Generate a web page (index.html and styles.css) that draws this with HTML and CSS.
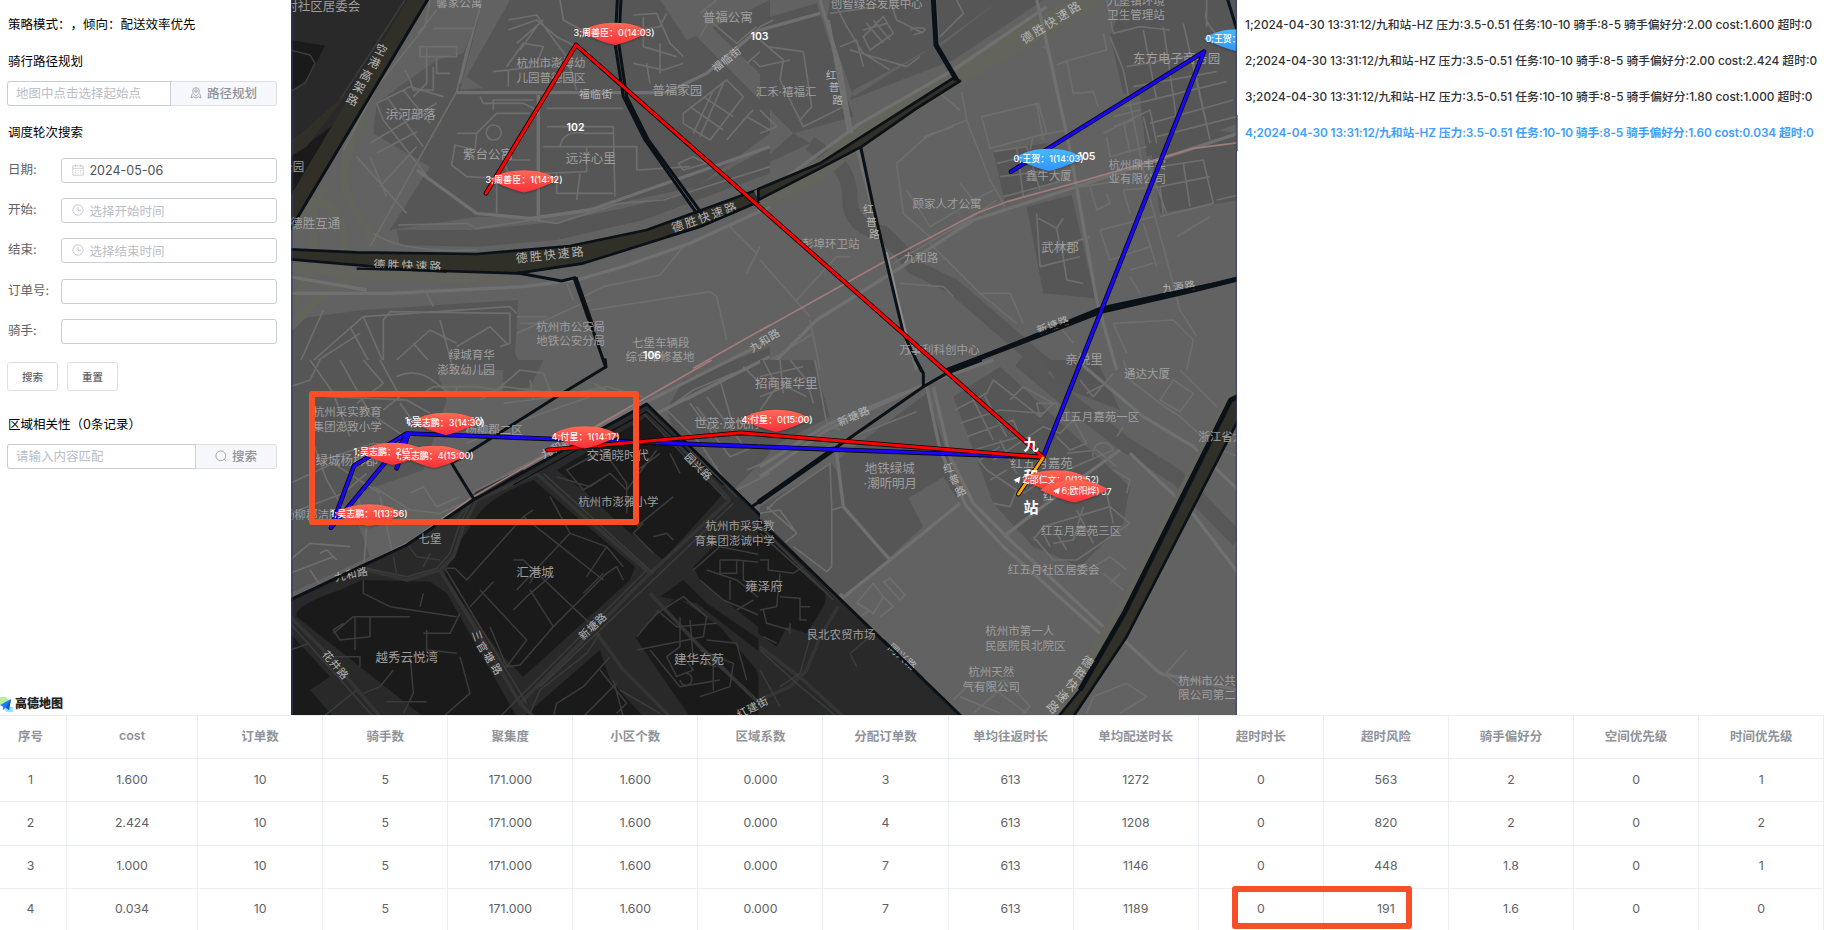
FILE: index.html
```html
<!DOCTYPE html>
<html lang="zh-CN">
<head>
<meta charset="utf-8">
<title>调度轮次</title>
<link rel="stylesheet" href="styles.css">
</head>
<body>
<div class="app">
  <div class="top">
    <aside class="side">
      <h3 class="title">策略模式：，倾向：配送效率优先</h3>
      <h3 class="title title-route">骑行路径规划</h3>
      <div class="group">
        <div class="ph group-input">地图中点击选择起始点</div>
        <div class="append append-wide">
          <svg class="icon" viewBox="0 0 12 12"><path d="M6 9.2C4 7 2.7 5.6 2.7 4A3.3 3.3 0 0 1 9.300 4C9.300 5.600 8 7 6 9.200Z"/><circle cx="6" cy="4" r="1.300"/><path d="M2.300 6.500 1 11 3.500 9.800 6 11 8.500 9.800 11 11 9.700 6.500"/></svg>
          <span>路径规划</span>
        </div>
      </div>
      <h3 class="title title-round">调度轮次搜索</h3>
      <div class="form">
        <div class="row"><label>日期:</label><div class="field date"><svg class="icon" viewBox="0 0 12 12"><path d="M.8 1.800H11.200V11.200H.8ZM.8 4.300H11.200M3.500.5V2.800M8.500.5V2.800M3 6.500H4M5.500 6.500H6.500M8 6.500H9M3 8.800H4M5.500 8.800H6.500M8 8.800H9"/></svg><span>2024-05-06</span></div></div>
        <div class="row"><label>开始:</label><div class="field ph"><svg class="icon" viewBox="0 0 12 12"><circle cx="6" cy="6" r="5.200"/><path d="M6 3V6.300H8.800"/></svg><span>选择开始时间</span></div></div>
        <div class="row"><label>结束:</label><div class="field ph"><svg class="icon" viewBox="0 0 12 12"><circle cx="6" cy="6" r="5.200"/><path d="M6 3V6.300H8.800"/></svg><span>选择结束时间</span></div></div>
        <div class="row"><label>订单号:</label><div class="field"></div></div>
        <div class="row"><label>骑手:</label><div class="field"></div></div>
      </div>
      <div class="buttons"><button class="btn">搜索</button><button class="btn">重置</button></div>
      <h3 class="title title-area">区域相关性（0条记录）</h3>
      <div class="group">
        <div class="ph group-input">请输入内容匹配</div>
        <div class="append append-narrow">
          <svg class="icon" viewBox="0 0 12 12"><circle cx="5.800" cy="5.800" r="4.900"/><path d="M9.400 9.400 11.300 11.300"/></svg>
          <span>搜索</span>
        </div>
      </div>
      <div class="logo">
        <svg class="logo-mark" viewBox="0 0 13 15"><path d="M0 0H6L9 4 0 8Z" fill="#b9ef9a"/><path d="M3 9 13 10V15H6Z" fill="#8fe6ff"/><path d="M0 8 11 2 9 13 5.500 10.500 3 13V9.500Z" fill="#1d7df5"/><path d="M11 2 5.500 10.500 9 13Z" fill="#1557dc"/></svg>
        <span>高德地图</span>
      </div>
    </aside>

    <svg class="map" viewBox="291 0 946 715">
      <defs>
        <linearGradient id="red" x1="0" y1="0" x2="0" y2="1"><stop offset="0" stop-color="#ff6a55"/><stop offset="1" stop-color="#f92f38"/></linearGradient>
        <linearGradient id="blue" x1="0" y1="0" x2="0" y2="1"><stop offset="0" stop-color="#45b9ff"/><stop offset="1" stop-color="#3494fb"/></linearGradient>
        <path id="leaf" d="M-34-1C-20-14 20-14 34-1C21 5 8 10 0 11.500C-8 10-21 5-34-1Z"/>
      </defs>
      <rect class="land" x="291" width="946" height="715"/>

      <!-- north-west -->
      <g transform="translate(290 0) scale(.33333)">
        <path class="block" d="M655 0H1110L1190 120 1440 0V400L1220 560 980 610 740 650 560 650 300 690 420 500 250 400 260 310 440 180 520 160 570 30ZM320 690 560 690 800 665 1000 625 1180 580 1440 440V520L1060 660 800 720 560 740 330 735Z"/>
        <path class="land" d="M530 230 660 0H580L510 270 580 265ZM1110 0 1440 330V250L1180 0Z"/>
        <path class="block" d="M0 960 220 930 685 900 675 1060 700 1110H0Z"/>
        <path class="dark" d="M0 0H412L0 690Z"/>
        <path class="darker" d="M0 120 105 137 55 235 0 275ZM0 470 150 360 100 440 0 600Z"/>
        <path class="rk" d="M0 150 60 165 75 190 45 250 0 275M345 0 130 330 0 430"/>
        <path class="hw" d="M352 0H412L0 695V590L190 270ZM180 270 50 440 0 470V430Z"/>
        <path class="ol" d="M235 340Q120 500 190 620T260 730M90 600Q170 640 165 760M70 590V750M110 560 0 700M0 800 300 830 660 835M180 830 80 900 0 980M60 820 0 930"/>
        <path class="r" d="M420 0 405 80 260 260 160 450M575 0 510 250M430 85H555M440 30 385 100M570 30 530 150 500 275M500 275 1090 280M500 275 240 740M390 140H500V170H390ZM410 140V250L370 290M440 170V220H480M345 210 360 240 370 270H430V200"/>
        <path class="rw" d="M500 278H1130L1250 220 1440 60M745 285V660M380 510 560 640 720 655 900 630 1440 440"/>
        <path class="r" d="M260 310 360 260 460 290M260 310 280 360 420 540M290 290 400 440M340 270 420 370M240 430 440 310M260 460 380 395M200 470 350 640M270 560 380 440M240 470 290 590M500 400H560M560 400 620 340H720M610 330V300H730M570 290 580 310H700L740 330M770 325H1000M610 375A22 22 0 1 0 612 420A22 22 0 1 0 610 375M560 400 555 450 495 435 485 495 530 530 740 540M620 540V640M660 535 640 480 720 480M770 380H970L975 590M810 440Q820 390 880 400H970M760 440H1040V510L1200 500M760 520 890 515M800 520V580H970M870 520 860 600M890 440V515"/>
        <path class="r" d="M655 60 740 45 770 90 830 170 860 270M655 90 740 60 800 110 900 160M680 130 760 60M650 200 700 130 760 140 740 190M690 150 740 80M610 215 700 205 830 190M655 210V260M810 0 820 60 930 120M1030 45 1100 40 1140 130 1180 170M1050 90 1110 80 1130 40M1060 50V140L1160 170M1030 190 1120 210 1180 190M1070 190 1080 250M1110 130V220M1240 45 1340 130 1400 80M1230 40 1280 0M1260 60 1230 110"/>
        <path class="r" d="M1180 340 1310 240 1360 290 1260 420 1180 370ZM1200 320 1300 390M1240 290 1330 350M1270 270 1210 400M1300 250 1230 410M1310 420 1370 350 1440 390M1370 350 1390 330M1390 180 1440 230M1370 190 1440 130M1165 490 1210 470 1250 490 1180 510Z"/>
        <path class="r" d="M325 675 530 670 560 685 730 660 800 670 990 610 1120 600 1440 500M250 700Q340 760 560 750"/>
        <path class="rw" d="M0 880 300 880 700 860 860 840 1000 800 1200 730 1440 620M0 830 230 870"/>
        <path class="r" d="M405 870 430 920M830 850 850 900M890 940 880 890 940 860 1110 825 1180 740M905 930 1260 875 1280 890 1310 1020M1320 680 1400 760M1410 740 1370 820M100 930 20 1110M60 1090 220 950 660 920 680 940M280 1080V960L300 935 660 940V1030L630 1040M220 950 290 1110M180 980 250 1110M70 1090 210 1000M320 1080 420 990 500 1030M370 1030 440 1110M500 1040 600 980 650 1030M450 960 490 1110M680 950H770M690 970H780M680 1000 900 900"/>
        <path class="rail" d="M1210 1105 1440 975"/>
        <path class="hw edge" d="M0 748 200 757 560 762 840 738 1070 690 1442 555V590L1230 680 880 790 680 820 370 810 0 778Z"/>
        <path class="bd" d="M415-5 0 690M982 0 975 130 1000 290 1065 420 1220 640M993 0 986 130 1010 290 1075 420 1235 640M680 818 815 843 855 833 948 1105"/>
        <path class="bd bd-wide" d="M855 833 905 975"/>
      </g>

      <!-- north-east -->
      <g transform="translate(760 0) scale(.33333)">
        <path class="block" d="M0 60 170 10 280 350 100 400 0 300ZM210 0H520V140L280 290 200 60ZM530 0H720L540 140ZM0 490 100 400 150 430 0 500ZM270 300 580 180 850 0H720L540 130 280 270ZM800 620 935 585 1005 895 850 880ZM700 455 860 430 890 540 735 610ZM1050 110 1090 0H1435V370L1160 470 1140 290 1090 280ZM1160 360 1435 400V600L1200 640Z"/>
        <path class="water" d="M150 430 220 480Q270 520 270 600T370 700L420 750 460 800 580 860 720 980 870 1110"/>
        <path class="ol band" d="M-5 600 180 510 310 400 590 230 1000-10"/>
        <path class="rw" d="M0 590 300 370 580 210 860 20M0 90 180 40M180 0 240 200 275 400M205 60 265 390M830 0 865 150 930 450 1010 900 1070 1110M290 440 380 790 470 1110M20 1110 170 960 410 810 640 660 950 560 1435 400"/>
        <path class="r" d="M0 120 70 180 60 240 130 380 250 320M20 140 130 155 155 320 120 360M0 200 90 180M0 80 40 60M230 20 260 80 310 160 390 210M240 140 290 120 310 200M310 110 370 50 400 100 330 150ZM320 70 370 130M340 60 390 120M310 90 380 70M390 0 410 60 490 100M450 90Q470 80 490 85T460 105M590 0 610 40 540 110M210 40 350 20M270 150 440 200 480 170M0 400 50 380 0 330"/>
        <path class="r" d="M605 275 620 360 690 540 735 620M410 490 500 410 620 360M410 490 430 640 520 720M490 410 580 380M665 350 835 310 860 400 690 445ZM830 310 850 420M700 455 800 440 840 570M720 530 890 510M710 490 860 455M730 590 900 545M770 440 790 590M810 450 820 410 920 390M600 550 645 605M440 570 510 680 680 580 700 570M890 195 930 180 1040 150 1030 100M920 180 940 280 1000 275 1015 320M850 140 870 150"/>
        <path class="r" d="M1060 100 1140 80 1230 90M1050 110 1090 210 1160 560 1210 740 1260 930 1310 1010M1040 0 1060 100M1100 200 1330 160M1120 260 1370 215M1090 320 1400 245M1170 370 1420 300M1190 410 1430 350M1150 90 1190 300M1210 80 1250 360M1270 70 1350 420M1340 30Q1320 80 1435 150M1300 190 1350 420M1340 0 1340 80"/>
        <path class="r" d="M1030 400 1170 330 1190 430M1040 410 1050 470 1160 440M1060 350 1140 330M1060 380 1120 360M1090 360 1110 460M1150 350 1170 430M970 560 1090 540M990 560 1010 630 1050 610 1040 580M1090 570 1200 560 1210 640M1090 570 1110 640M1160 480 1220 640M1200 500 1330 480 1360 610 1200 650M1270 490 1290 620M1200 560 1350 530M1370 600 1435 585M1250 710 1350 650M1020 690 1180 650M1020 690 1050 780 1170 740M1150 670 1190 800M1110 810 1180 790M1110 830 1140 880"/>
        <path class="r" d="M835 655 890 685 910 655M890 685 900 740 990 710M830 640 840 800 960 770M905 740 920 840 970 850M0 780 150 950M110 900 230 770 270 770M420 850 550 860 580 890M510 730 660 880 770 970M660 880 750 880 790 970M0 1100 160 1000M150 960 180 1110M1060 970 1240 960 1300 1020 1280 1110M1060 970 1100 1060M900 980 940 1030M540 280 600 330M640 650 400 790M710 600 570 700"/>
        <path class="rail" d="M0 993 400 770 650 640 740 605 960 545 1150 490 1300 445 1435 428"/>
        <path class="lite" d="M380 760 450 1060 420 960Z"/>
        <path class="hw edge" d="M-5 567 180 490 290 420 583 232 600 243 470 325 305 440 180 505-5 600Z"/>
        <path class="bd bd-wide" d="M520-5 528 135 590 240"/>
        <path class="bd" d="M302 440 340 620 430 1000 485 1115M560 1112 790 1020 1020 925 1300 865 1440 835M1402-5 1440 120"/>
        <path class="bd bd-wide" d="M560 1112 840 1005 1020 935 1300 870 1440 835"/>
      </g>

      <!-- south-west -->
      <g transform="translate(290 360) scale(.33333)">
        <path class="block" d="M0 0H430L470 120 400 330 200 400 180 560 0 640ZM640 0 760 0 720 80 640 100ZM1180 60 1440-40V280L1320 400 1160 250 1130 150ZM130 500 200 480 240 590 0 700V600Z"/>
        <path class="r" d="M60 0 130 100 180 230M150 0 240 160 360 240M220 0 280 70 200 130M270 0 330 110 280 150M320 50Q380 20 440 70T500 80M110 110 350 120 420 160M380 110 430 80H560L620 90 690 30 760 40 780 90 720 110M0 80 60 60 90 0M570 120 640 80 800 100 950 90 910 70M720 60 730 120M640 130 800 110 950 80 1060 110M100 300 250 250 420 270M0 370 130 310 270 400M70 250 110 360 180 480M0 460 160 400 230 340M250 380 360 450 450 460 520 430M360 400 400 380 440 440 510 410M200 400 230 500 220 640M270 410 310 590M0 600 60 550 180 560M0 640 130 590M60 630 120 720M90 580 110 570 140 600M330 130 380 200M530 250 700 180 900 110"/>
        <path class="r" d="M1190 120 1400 10M1130 150 1230 250 1330 400M1200 130 1320 290 1440 240M1250 110 1370 270M1290 60 1330 200M1360 20 1440 100M1140 140 1210 90 1330 40M1220 140 1290 230M1320 400 1440 340M1370 330 1440 300"/>
        <path class="rw" d="M560 430 1000 210 1440-10M550 400 1000 160 1440-60"/>
        <path class="dark" d="M0 720 350 555 550 420 1070 132 1385 440 1445 500V1070H0Z"/>
        <path class="darker" d="M20 760Q30 730 150 690L215 660 420 665 470 700 680 1070H400L20 770ZM0 820 120 950 60 990 130 1070H0ZM560 470Q600 410 730 360L1035 620 1020 660 700 950 630 880 460 650 500 560ZM800 330 1070 170 1300 400 1120 600 1010 510 890 400ZM1210 620 1300 530 1440 550V830L1230 660ZM1035 830 1160 710 1290 800 1400 930 1440 1060 1200 1070 1130 970ZM700 1070 930 870 960 960 1060 1070ZM1110 710 1180 660 1250 730 1440 860V900L1220 730Z"/>
        <path class="rk wide" d="M230 630 350 660 450 630 490 590 520 500 560 420 740 340M740 340 860 450 1080 640M450 630 560 810 690 1030 730 1070M1080 640 690 1030M1320 420 1080 640M1070 150 1320 420M0 770 110 880 270 1070M500 480 560 400 700 330M920 820 1000 930 1140 1070M1080 700 1230 860 1440 1060"/>
        <path class="rk" d="M230 625 350 650 440 625 480 580 510 490 545 425M760 340 870 440 1090 640M465 625 570 800 710 1030M1070 630 700 1000 630 1070M1330 430 1100 650 750 980M1060 160 1310 420M1080 145 1340 410M0 790 250 1070M470 625 495 625 530 660 700 470 730 450M670 600H700L910 800M700 470 940 660M780 410 840 520 680 690M840 520 950 560 1000 620M570 690 710 840 650 920 600 800M540 740 610 665M670 750 710 710 780 650M720 690 790 800M780 810 950 640 980 620 1000 660M880 700 940 640M950 560 890 650M650 920 690 915 790 800M720 670 730 650"/>
        <path class="rk" d="M800 350 900 380 960 340 880 390 830 330 940 270 1010 370 1010 460M960 340 1010 390 1100 270M1030 340 1110 280M1040 500 1150 410M1140 280 1170 340M1090 580 1030 520 1060 490M1090 530 1130 520 1150 540M220 660V700L300 740 500 770M130 820 190 770H360M195 770V870M240 770V830L150 840 130 810 160 790M390 740 400 700M410 810V870L500 880M360 880 370 1000 340 1060M400 820 480 820 510 760M510 890 540 1000 460 1070M290 1025H410M220 1000 270 980 310 930M130 890H210V920M0 870 60 850M200 990 100 1070"/>
        <path class="rk" d="M310 590 320 640M350 550 380 590 450 600M420 580 400 620M1210 630 1290 560 1440 590M1290 600H1340V640H1290ZM1340 600 1440 610M1250 630 1340 660 1440 740M1230 660 1300 720 1440 780M1320 660V720M1360 600V660L1440 700M1340 750 1390 720M1040 830 1100 760 1180 710 1250 770 1240 830 1040 870M1080 870 1170 980 1290 960M1100 750 1160 800 1280 790M1170 770V860L1130 890 1160 950 1210 930 1180 890M1200 780 1210 900 1280 920M1250 840 1340 850 1370 960M1230 870 1330 910 1320 980 1230 1010M1270 900V990M1170 960A18 18 0 1 0 1190 940M930 820 890 880 750 990 720 1060M790 1070 800 1030 880 980 960 890M930 930 1010 1030 980 1060M880 1070 980 970M970 960 1000 1070M990 990 1110 1060"/>
        <path class="rail" d="M220 615 360 545 550 410 1265 0"/>
        <path class="bd" d="M945-5 948 20 800 110 485 310 553 420M0 720 350 555 550 420 1070 132 1445 500M1385 440 1445 400"/>
        <path class="bd thin" d="M670 375 1070 155 1300 375"/>
      </g>

      <!-- south-east -->
      <g transform="translate(760 360) scale(.33333)">
        <path class="block" d="M0 0H160L210 170 0 280ZM230 300 500 100 600 400 390 590 250 440ZM0 440 215 310 390 600 245 715 0 480ZM580 110 720 20 1110 380 1090 490 960 620 820 560 700 430ZM850 0H1010L1080 150 900 80Z"/>
        <path class="land" d="M445 415 550 350 600 430 490 500Z"/>
        <path class="water" d="M780 0 900 100 1090 250 1250 350 1435 540"/>
        <path class="rw" d="M0 350 200 210 500 70 700 0M0 320 210 190 480 80M500 80 540 270 620 440 730 560 1020 820M520 80 570 290 640 430 750 540 1030 800M600 430 390 600 240 720M230 280 250 440 390 600M730 530 900 400 1080 270M950 0 1150 170 1300 260 1435 390M1110 280 1290 450 1435 640M1080 830 1200 940 1435 990M245 700 130 950 0 1030"/>
        <path class="r" d="M0 50 130 20M0 110 80 80 140 110M60 0 70 100M10 0 50 80 0 150M90 0 140 60 160 130M165 0 200 190 240 210M470 155 200 260M0 460 60 450 110 520 60 560 0 530M20 450 50 420 210 310 215 440V620L200 635 100 560M20 440 100 510M215 450 250 440"/>
        <path class="r" d="M585 150 680 100 700 60 840 170 880 130 790 80 750 120M600 190 720 150 850 160M620 230 760 180 780 230 640 270M640 120 700 240M670 100 740 230M700 300 760 260 850 200 900 220 940 180 980 250 930 270 890 230M840 170 830 130 890 130 900 190M640 280 680 330 770 390 750 440 700 430M660 300 720 260M720 240 770 340M690 360 740 330M920 280 1010 270 1070 320M790 400 850 360 1060 270A15 15 0 1 0 1000 290M820 540 850 500 1050 440 1110 490 950 600 880 600 820 530M880 550 940 540 970 440M890 520 920 570M950 450 1000 550M1040 400 1060 490M1060 330 1110 360 1100 400M850 520 870 560"/>
        <path class="r" d="M1090 0 1110 60 1200 130 1260 170 1360 260 1435 290M1260 30 1370 140M1200 120 1240 60 1300 100 1260 155ZM980 100 1040 70M960 60 1000 110 1060 40M290 730 340 670 370 710 340 760 290 730M370 665 390 655 435 705 420 720ZM370 710 400 740 360 770M1000 620 1050 590 1100 630M1030 640 1090 690M1050 670 1080 640M1280 870 1210 950M1260 980 1210 940M980 1060 1000 1010 1100 970 1160 1010 1080 1060M580 1020 620 980 740 960 810 1040 790 1060M600 1010 720 1060M640 1060 740 970M680 970 800 1060M300 770 330 750M1090 200 1070 230"/>
        <path class="dark" d="M-5 480 600 1070H-5Z"/>
        <path class="darker" d="M-5 500 190 690Q205 710 190 740L140 820 80 800 50 860-5 820Z"/>
        <path class="rk wide" d="M235 740 180 830 140 930 90 980 0 1020M0 860 130 960 250 1070M0 480 240 720"/>
        <path class="rk" d="M0 600H25V630L100 640 130 620M60 640 50 740 0 750M60 710 120 715V780H140M10 750 20 790 90 810M120 740H150M90 790V820M50 850 10 830M0 930 60 1040M0 500 220 720M0 520 200 700M270 880 290 920M270 880 330 830M0 870 110 970 230 1070M160 800 120 940 60 980"/>
        <path class="ol side" d="M1440 90 1405 125 1160 610 1020 850 870 1065"/>
        <path class="hw edge" d="M1445 105 1412 120 1095 755 960 990 895 1070H940L1100 830 1445 160Z"/>
        <path class="bd bd-wide" d="M1445 105 1412 120 1095 755 960 990M-5 427 225 265"/>
        <path class="bd" d="M-5 427 225 265 490 80M465-5 490 40V80L560 40 665 0M-5 480 605 1070"/>
      </g>

      <!-- place names -->
      <g transform="translate(290 0) scale(.33333)">
        <text class="p" x="98" y="33">村社区居委会</text><text class="s" x="508" y="20">馨家公寓</text>
        <text class="p" x="1313" y="66">普福公寓</text><text class="s" x="783" y="202">杭州市澎博幼</text><text class="s" x="783" y="245">儿园普德园区</text>
        <text class="p" x="1162" y="286">普福家园</text><text class="road" x="918" y="295">福临街</text><text class="p" x="362" y="356">浜河部落</text>
        <text class="p" x="594" y="477">紫台公寓</text><text class="p" x="902" y="490">远洋心里</text><text class="s" x="8" y="512">公园</text><text class="p" x="76" y="683">德胜互通</text>
        <text class="s" x="842" y="993">杭州市公安局</text><text class="s" x="842" y="1036">地铁公安分局</text><text class="s" x="1112" y="1041">七堡车辆段</text><text class="s" x="1110" y="1084">综合维修基地</text>
        <text class="s" x="545" y="1077">绿城育华</text><text class="s" x="528" y="1121">澎致幼儿园</text>
        <g class="road big"><text transform="translate(275 152) rotate(25)" y="12">空</text><text transform="translate(255 190) rotate(25)" y="12">港</text><text transform="translate(230 229) rotate(25)" y="12">高</text><text transform="translate(210 264) rotate(25)" y="12">架</text><text transform="translate(189 302) rotate(25)" y="12">路</text></g>
        <text class="road" transform="translate(1310 177) rotate(-38)" y="12">福临街</text>
        <text class="road big" transform="translate(355 798) rotate(2)" y="12">德胜快速路</text><text class="road big" transform="translate(782 765) rotate(-6)" y="12">德胜快速路</text><text class="road big" transform="translate(1245 652) rotate(-19)" y="12">德胜快速路</text>
        <text class="road" transform="translate(1424 1020) rotate(-32)" y="12">九和路</text>
        <path class="bd over" d="M200 806 370 810 470 815M1130 710 1230 680 1350 628"/>
      </g>
      <g transform="translate(760 0) scale(.33333)">
        <text class="s" x="350" y="25">创智绿谷发展中心</text><text class="s" x="1128" y="14">九堡镇环境</text><text class="s" x="1128" y="57">卫生管理站</text><text class="p" x="1250" y="188">东方电子商务园</text>
        <text class="s" x="78" y="288">汇禾·禧福汇</text><text class="s" x="866" y="540">鑫牛大厦</text><text class="s" x="1132" y="508">杭州鼎丰实</text><text class="s" x="1132" y="550">业有限公司</text>
        <text class="s" x="561" y="625">顾家人才公寓</text><text class="p" x="900" y="755">武林郡</text><text class="s" x="212" y="744">彭埠环卫站</text><text class="s" x="483" y="787">九和路</text><text class="s" x="538" y="1062">万事利科创中心</text><text class="p" x="972" y="1092">亲悦里</text>
        <text class="road big" transform="translate(875 67) rotate(-32)" y="12">德胜快速路</text>
        <g class="road"><text x="214" y="238">红</text><text x="223" y="274">普</text><text x="234" y="311">路</text><text x="326" y="640">红</text><text x="335" y="677">普</text><text x="344" y="714">路</text></g>
        <text class="road" transform="translate(1257 860) rotate(-7)" y="12">九源路</text><text class="road" transform="translate(879 975) rotate(-20)" y="12">新塘路</text>
        <path class="bd over" d="M820 1008 940 963M1200 885 1320 861"/>
      </g>
      <g transform="translate(290 360) scale(.33333)">
        <text class="s" x="172" y="168">杭州采实教育</text><text class="s" x="172" y="212">集团澎致小学</text><text class="p" x="170" y="315">绿城杨柳郡</text><text class="s" x="612" y="221">杨柳郡二区</text><text class="s" x="65" y="478">杨柳郡洁园</text>
        <text class="p" x="983" y="301">交通晓时代</text><text class="s" x="985" y="438">杭州市澎雅小学</text><text class="p" x="1312" y="204">世茂·茂悦府</text><text class="s" x="420" y="550">七堡</text><text class="p" x="735" y="650">汇港城</text>
        <text class="s" x="1350" y="511">杭州市采实教</text><text class="s" x="1334" y="555">育集团澎诚中学</text><text class="p" x="1422" y="693">雍泽府</text><text class="p" x="350" y="905">越秀云悦湾</text><text class="p" x="1227" y="911">建华东苑</text><text class="p" x="1489" y="85">招商雍华里</text>
        <text class="road" transform="translate(184 642) rotate(-12)" y="12">九和路</text><text class="road" transform="translate(800 262) rotate(-28)" y="12">九和路</text><text class="road" transform="translate(1226 320) rotate(45)" y="12">园兴路</text><text class="road" transform="translate(908 798) rotate(-43)" y="12">新塘路</text><text class="road" transform="translate(137 915) rotate(49)" y="12">花井路</text>
        <path class="bd over" d="M120 663 240 606"/>
        <g class="road"><text transform="translate(562 828) rotate(70)" y="12">三</text><text transform="translate(577 862) rotate(60)" y="12">官</text><text transform="translate(598 893) rotate(60)" y="12">塘</text><text transform="translate(621 928) rotate(60)" y="12">路</text></g>
        <text class="road" transform="translate(1388 1042) rotate(-28)" y="12">红建街</text>
      </g>
      <g transform="translate(760 360) scale(.33333)">
        <text class="s" x="1161" y="53">通达大厦</text><text class="s" x="1017" y="182">红五月嘉苑一区</text><text class="s" x="1384" y="242">浙江省大</text><text class="p" x="845" y="324">红五月嘉苑</text><text class="p" x="389" y="339">地铁绿城</text><text class="p" x="391" y="385">·潮听明月</text>
        <text class="s" x="963" y="526">红五月嘉苑三区</text><text class="s" x="881" y="642">红五月社区居委会</text><text class="s" x="243" y="838">艮北农贸市场</text><text class="s" x="779" y="826">杭州市第一人</text><text class="s" x="796" y="869">民医院艮北院区</text>
        <text class="s" x="694" y="949">杭州天然</text><text class="s" x="694" y="993">气有限公司</text><text class="s" x="1341" y="974">杭州市公共</text><text class="s" x="1341" y="1017">限公司第二</text>
        <text class="road" transform="translate(281 168) rotate(-24)" y="12">新塘路</text><text class="road" transform="translate(428 890) rotate(41)" y="12">同兴路</text>
        <path class="bd over" d="M370 840 490 957"/>
        <g class="road"><text transform="translate(566 324) rotate(-15)" y="12">红</text><text transform="translate(583 358) rotate(-20)" y="12">普</text><text transform="translate(602 393) rotate(-25)" y="12">路</text><text x="866" y="420">红</text></g>
        <g class="road big"><text transform="translate(984 908) rotate(35)" y="12">德</text><text transform="translate(962 942) rotate(35)" y="12">胜</text><text transform="translate(937 977) rotate(40)" y="12">快</text><text transform="translate(908 1011) rotate(45)" y="12">速</text><text transform="translate(880 1044) rotate(45)" y="12">路</text></g>
      </g>

      <!-- delivery routes -->
      <path class="casing" d="M1011 171.700 1204 51.700 1043 457.300 406.700 433.500 354 465.700 331 527.700 408 435 396.700 468.300M1043 458 1018.500 494"/>
      <path class="route c-blue" d="M1011 171.700 1204 51.700 1043 457.300 406.700 433.500 354 465.700 331 527.700 408 435 396.700 468.300"/>
      <path class="casing" d="M486 193.300 576 45 1043.300 457.300 740.500 432.800 547.500 450"/>
      <path class="route c-red" d="M486 193.300 576 45 1043.300 457.300 740.500 432.800 547.500 450"/>
      <path class="route c-orange" d="M1043 458 1018.500 494"/>

      <!-- zone ids and station -->
      <g class="zone"><text x="759.500" y="40">103</text><text x="575.500" y="131">102</text><text x="1086.500" y="160">105</text><text x="652" y="359">106</text></g>
      <g class="station"><text x="1031" y="450">九</text><text x="1031" y="481.500">和</text><text x="1031" y="513">站</text></g>

      <!-- rider stops -->
      <g class="stops">
        <use class="f-red" href="#leaf" x="615" y="33.500"/><text x="573.500" y="36" textLength="81">3;周善臣：0(14:03)</text>
        <use class="f-red" href="#leaf" x="524" y="181"/><text x="485.500" y="183" textLength="77">3;周善臣：1(14:12)</text>
        <text x="405" y="423.500" textLength="78">1;吴志鹏：0(13:52)</text>
        <use class="f-red" href="#leaf" x="446" y="423.500"/><text x="406.500" y="425.500" textLength="78">1;吴志鹏：3(14:30)</text>
        <use class="f-red" href="#leaf" x="393" y="453.500"/><text x="353.500" y="455" textLength="78">1;吴志鹏：2(13:59)</text>
        <use class="f-red" href="#leaf" x="434" y="456.500"/><text x="395.500" y="459" textLength="78">1;吴志鹏：4(15:00)</text>
        <use class="f-red" href="#leaf" x="369" y="515"/><text x="330.500" y="517" textLength="77">1;吴志鹏：1(13:56)</text>
        <use class="f-red" href="#leaf" x="585" y="437"/><text x="551.500" y="440" textLength="68">4;付星：1(14:17)</text>
        <use class="f-red" href="#leaf" x="776" y="420.500"/><text x="741.500" y="423" textLength="71">4;付星：0(15:00)</text>
        <use class="f-blue" href="#leaf" x="1049" y="159.500"/><text x="1013.500" y="162" textLength="70">0;王贺：1(14:03)</text>
        <use class="f-blue" href="#leaf" x="1238" y="40"/><text x="1205.500" y="42" textLength="70">0;王贺：0(13:56)</text>
        <use class="f-red" href="#leaf" x="1056" y="481"/>
        <path class="plane" d="M1013.500 480 1020.500 476.500 1019 483.500 1017 481.500 1015.500 483 1015.500 481Z"/>
        <text class="light" x="1022" y="482.500" textLength="77">2;邵仁文：0(13:52)</text>
        <text class="light" x="1101" y="495">57</text>
        <use class="f-red" href="#leaf" x="1074" y="491"/>
        <path class="plane" d="M1053 491 1060 487.500 1058.500 494.500 1056.500 492.500 1055 494 1055 492Z"/>
        <text class="light" x="1061.500" y="494" textLength="38">6;欧阳烨)</text>
      </g>
      <path class="rim" d="M292 0V715M1236.500 0V715"/>
    </svg>

    <ul class="rounds">
      <li>1;2024-04-30 13:31:12/九和站-HZ 压力:3.5-0.51 任务:10-10 骑手:8-5 骑手偏好分:2.00 cost:1.600 超时:0</li>
      <li>2;2024-04-30 13:31:12/九和站-HZ 压力:3.5-0.51 任务:10-10 骑手:8-5 骑手偏好分:2.00 cost:2.424 超时:0</li>
      <li>3;2024-04-30 13:31:12/九和站-HZ 压力:3.5-0.51 任务:10-10 骑手:8-5 骑手偏好分:1.80 cost:1.000 超时:0</li>
      <li class="active">4;2024-04-30 13:31:12/九和站-HZ 压力:3.5-0.51 任务:10-10 骑手:8-5 骑手偏好分:1.60 cost:0.034 超时:0</li>
    </ul>
  </div>

  <table class="stats">
    <colgroup><col class="c-no"><col class="c-cost"><col span="13" class="c-rest"></colgroup>
    <thead><tr><th>序号</th><th>cost</th><th>订单数</th><th>骑手数</th><th>聚集度</th><th>小区个数</th><th>区域系数</th><th>分配订单数</th><th>单均往返时长</th><th>单均配送时长</th><th>超时时长</th><th>超时风险</th><th>骑手偏好分</th><th>空间优先级</th><th>时间优先级</th></tr></thead>
    <tbody>
      <tr><td>1</td><td>1.600</td><td>10</td><td>5</td><td>171.000</td><td>1.600</td><td>0.000</td><td>3</td><td>613</td><td>1272</td><td>0</td><td>563</td><td>2</td><td>0</td><td>1</td></tr>
      <tr><td>2</td><td>2.424</td><td>10</td><td>5</td><td>171.000</td><td>1.600</td><td>0.000</td><td>4</td><td>613</td><td>1208</td><td>0</td><td>820</td><td>2</td><td>0</td><td>2</td></tr>
      <tr><td>3</td><td>1.000</td><td>10</td><td>5</td><td>171.000</td><td>1.600</td><td>0.000</td><td>7</td><td>613</td><td>1146</td><td>0</td><td>448</td><td>1.8</td><td>0</td><td>1</td></tr>
      <tr><td>4</td><td>0.034</td><td>10</td><td>5</td><td>171.000</td><td>1.600</td><td>0.000</td><td>7</td><td>613</td><td>1189</td><td>0</td><td>191</td><td>1.6</td><td>0</td><td>0</td></tr>
    </tbody>
  </table>
  <div class="mark mark-map"></div>
  <div class="mark mark-table"></div>
</div>
</body>
</html>
```

FILE: styles.css
```css
* { box-sizing: border-box; }
body { margin: 0; background: #fff; font-family: Inter, "Noto Sans CJK SC", sans-serif; color: #606266; overflow: hidden; text-spacing-trim: space-all; }
.app { position: relative; width: 1824px; height: 930px; overflow: hidden; display: flex; flex-direction: column; }
.top { display: flex; flex: none; height: 715px; }

/* left panel */
.side { width: 291px; padding: 15px 14px 3px 7px; display: flex; flex-direction: column; font-size: 12.500px; }
.title { margin: 0 0 0 1px; font-size: 12.500px; line-height: 20px; font-weight: 400; color: #000; white-space: nowrap; }
.title-route { margin-top: 17px; margin-bottom: 9px; }
.title-round { margin-top: 17px; margin-bottom: 15px; }
.title-area { margin-top: 24px; margin-bottom: 9px; }
.group { display: flex; height: 25px; border: 1px solid #dcdfe6; border-radius: 3px; background: #f5f7fa; }
.ph { color: #b9bdc6; }
.group-input { flex: 1; margin: -1px 0 -1px -1px; padding-left: 8px; line-height: 24px; background: #fff; border: 1px solid #c9cdd8; border-radius: 3px 0 0 3px; }
.append { display: flex; align-items: center; justify-content: center; gap: 5px; padding-bottom: 2px; color: #909399; font-weight: 500; }
.append-wide { width: 105px; }
.append-narrow { width: 80px; }
.icon { width: 12px; height: 12px; fill: none; stroke: currentColor; stroke-width: .8; }
.form { display: flex; flex-direction: column; gap: 15.200px; }
.row { display: flex; height: 25px; }
.row label { width: 54px; padding-left: 1px; line-height: 23px; }
.field { flex: 1; display: flex; align-items: center; gap: 6px; padding-left: 9.500px; border: 1px solid #c9cdd8; border-radius: 3px; }
.field .icon { margin-bottom: 2px; }
.date { color: #4c5058; }
.date .icon { color: #c0c4cc; }
.buttons { display: flex; gap: 9px; margin-top: 18.500px; }
.btn { width: 51px; height: 29px; padding: 0 0 1px; background: #fff; border: 1px solid #dcdfe6; border-radius: 3px; font: 500 10.500px Inter, "Noto Sans CJK SC", sans-serif; color: #606266; }
.logo { display: flex; align-items: center; gap: 2px; height: 15px; margin: auto 0 0 -7px; font-size: 12px; font-weight: 900; line-height: 12px; color: #222; }
.logo span { padding-bottom: 2px; }
.logo-mark { width: 13px; height: 15px; }

/* map */
.map { flex: none; width: 946px; height: 715px; display: block; }
.map path { stroke-linejoin: round; }
.land { fill: #626262; }
.block { fill: #565656; }
.dark { fill: #292929; }
.darker { fill: #1a1a1a; }
.r, .rw, .rk, .ol, .water, .rail, .bd { fill: none; }
.r { stroke: #6e6e6e; stroke-width: 5; }
.rw { stroke: #707070; stroke-width: 10; }
.rk { stroke: #3b3b3b; stroke-width: 4.500; }
.rk.wide { stroke: #343434; stroke-width: 11; }
.ol { stroke: #63645c; stroke-width: 28; }
.ol.band { stroke-width: 60; }
.ol.side { stroke-width: 30; }
.water { stroke: #575757; stroke-width: 46; }
.rail { stroke: #a27b7b; stroke-width: 5; }
.lite { fill: #8b8d8f; stroke: #8b8d8f; stroke-width: 8; }
.hw { fill: #302f28; }
.bd { stroke: #0a1117; stroke-width: 9; }
.bd.thin { stroke-width: 4; }
.bd.over { stroke-width: 7; }
.bd-wide { stroke-width: 15; }
.edge { stroke: #0a1117; stroke-width: 8; }
.map text { font-family: Inter, "Noto Sans CJK SC", sans-serif; }
.p, .s, .road { text-anchor: middle; fill: #9e9e9e; }
.p { font-size: 37.500px; }
.s { font-size: 34.500px; }
.road { font-size: 32px; letter-spacing: 2px; fill: #b4b4b4; }
.road.big { font-size: 36px; letter-spacing: 6px; }
.casing { fill: none; stroke: #080808; stroke-width: 4.700; stroke-linecap: round; }
.route { fill: none; stroke-width: 3; stroke-linecap: round; }
.c-blue { stroke: #1a05ff; }
.c-red { stroke: #f00; }
.c-orange { stroke: #ffa400; }
.zone { fill: #fff; font-size: 10.500px; font-weight: 600; text-anchor: middle; }
.station { fill: #fff; font-size: 15px; font-weight: 700; text-anchor: middle; }
.stops text { fill: #fff; font-size: 9px; font-weight: 500; }
.stops text.light { font-weight: 400; }
.stops use { filter: drop-shadow(0 1px 1px rgba(0, 0, 0, .3)); }
.f-red { fill: url(#red); }
.f-blue { fill: url(#blue); }
.plane { fill: #fff; }
.rim { fill: none; stroke: #343d6b; stroke-width: 1.500; opacity: .7; }

/* dispatch rounds */
.rounds { flex: 1; margin: 0; padding: 7px 0 0; list-style: none; font-size: 11.800px; font-weight: 500; color: #303133; white-space: nowrap; }
.rounds li { height: 36px; line-height: 36px; padding-left: 7px; border-left: 1px solid transparent; }
.rounds .active { color: #409eff; border-color: #409eff; font-weight: 600; letter-spacing: -.09px; }

/* statistics */
.stats { width: 1824px; table-layout: fixed; border-collapse: separate; border-spacing: 0; border-top: 1px solid #ebeef5; font-size: 12.300px; }
.stats th, .stats td { height: 43.250px; padding: 0 0 2px; text-align: center; border-right: 1px solid #ebeef5; border-bottom: 1px solid #ebeef5; }
.stats th { height: 43px; padding-bottom: 3px; font-size: 12.500px; font-weight: 600; color: #909399; }
.stats th:first-child, .stats td:first-child { padding-right: 5px; }
.c-no { width: 67px; }
.c-cost { width: 131px; }
.c-rest { width: 125.100px; }

/* highlights */
.mark { position: absolute; border: 6px solid #f94f26; border-radius: 3px; }
.mark-map { left: 309px; top: 391px; width: 330px; height: 134px; }
.mark-table { left: 1232px; top: 886px; width: 180px; height: 43px; }
```
